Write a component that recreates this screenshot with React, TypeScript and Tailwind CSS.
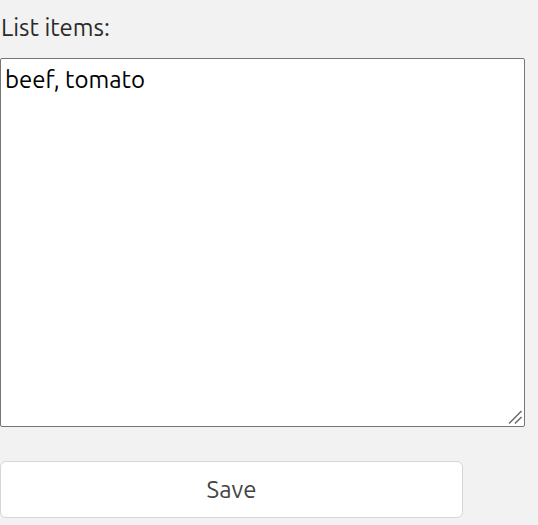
export default function App() {
  return (
    <div
      className="min-h-[525px] w-[538px] bg-[#f1f2f1] text-[#222]"
      style={{ fontFamily: '"Ubuntu", "Noto Sans", sans-serif' }}
    >
      <label htmlFor="items" className="block pt-[13px] pl-[1px] text-[24px] leading-[30px] text-[#2b2b2b]">
        List items:
      </label>
      <div className="relative mt-[15px] w-[525px]">
        <textarea
          id="items"
          defaultValue="beef, tomato"
          className="block h-[369px] w-[525px] resize-none rounded-[2px] border border-[#767676] bg-white px-[4px] py-[6px] text-[24px] leading-[30px] text-black outline-none"
        />
        {/* resize grip */}
        <svg
          className="pointer-events-none absolute bottom-[3px] right-[3px]"
          width="14"
          height="14"
          viewBox="0 0 14 14"
        >
          <line x1="1" y1="13.5" x2="13.5" y2="1" stroke="#666" strokeWidth="1.4" />
          <line x1="7" y1="13.5" x2="13.5" y2="7" stroke="#666" strokeWidth="1.4" />
        </svg>
      </div>
      <button className="mt-[34px] block h-[57px] w-[463px] rounded-[6px] border border-[#d4d6d8] bg-white text-[24px] text-[#444]">
        Save
      </button>
    </div>
  );
}
